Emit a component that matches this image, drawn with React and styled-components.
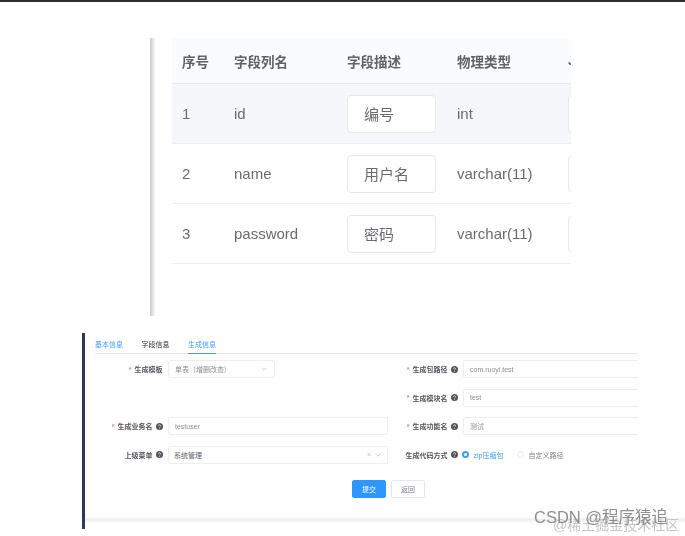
import React from "react";
import styled, { createGlobalStyle } from "styled-components";

const Global = createGlobalStyle`
  html, body { margin: 0; padding: 0; background: #fff; }
  body { font-family: "Liberation Sans", "Noto Sans CJK SC", sans-serif; }
`;
const Page = styled.div`
  position: relative; width: 685px; height: 536px; overflow: hidden; background: #fff;
  display: flex; flex-direction: column;
`;
const TopBar = styled.div`height: 2px; background: #2e2e2e; flex: none;`;
const Shot = styled.section`
  flex: none; margin: 36px 0 0 150px; width: 421px; height: 278px; display: flex;
  background: linear-gradient(90deg, #c9c9c9 0, #e6e6e6 3px, #fff 6px);
`;
const Table = styled.div`
  margin-left: 22px; width: 399px; overflow: hidden; color: #696b70; font-size: 15px; filter: blur(.5px);
`;
const Row = styled.div`
  display: grid; grid-template-columns: 62px 113px 110px 111px 60px; align-items: center;
  height: ${p => p.$head ? "45px" : "59px"};
  background: ${p => p.$head ? "#fafbfc" : p.$active ? "#f5f7fa" : "#fff"};
  border-bottom: 1px solid #ebeef5;
  ${p => p.$head && "color:#606266;font-weight:700;font-size:13.5px;border-bottom-color:#e4e8ef;"}
`;
const Cell = styled.div`padding-left: ${p => p.$first ? "10px" : "0"}; white-space: nowrap;`;
const Field = styled.div`
  box-sizing: border-box; width: ${p => p.$w || "89px"}; height: 38px; background: #fff;
  border: 1px solid #e6e8ec; border-radius: 4px; padding-left: 16px; line-height: 38px;
`;

const Shot2 = styled.section`
  flex: none; margin: 17px 0 0 82px; width: 603px; height: 196px; box-sizing: border-box;
  border-left: 3px solid #2c3a52; position: relative; color: #606266; font-size: 7px;
  display: flex; flex-direction: column; filter: blur(.45px);
`;
const Tabs = styled.div`
  margin: 0 47px 0 10px; height: 20px; display: flex; gap: 18.5px; border-bottom: 1px solid #e4e7ed; flex: none;
`;
const Tab = styled.div`
  height: 21px; box-sizing: border-box; line-height: 23px; color: ${p => p.$blue ? "#409eff" : "#303133"};
  ${p => p.$on && "border-bottom:1px solid #409eff;"}
`;
const Form = styled.div`
  display: grid; grid-template-columns: 303px 250px; margin-top: 1px; grid-auto-rows: 28.5px; flex: none;
`;
const Item = styled.div`display: flex; align-items: center; height: 28px;`;
const Label = styled.label`
  width: ${p => p.$w}px; flex: none; display: flex; justify-content: flex-end; align-items: center;
  gap: 3px; padding-right: 5.5px; box-sizing: border-box; color: #54565b; font-weight: 700; white-space: nowrap;
`;
const Star = styled.span`color: #e08a8a; margin-right: 0;`;
const Q = styled.svg`width: 7px; height: 7px; flex: none;`;
const Input = styled.div`
  box-sizing: border-box; width: ${p => p.$w}px; height: 18px; border: 1px solid #eceef2; border-radius: 2px;
  padding: 0 ${p => p.$pl ?? 6}px; display: flex; align-items: center; justify-content: space-between;
  color: ${p => p.$dark ? "#606266" : "#8a8d93"}; background: #fff;
  ${p => p.$open && "border-right:none;border-radius:2px 0 0 2px;"}
`;
const Arrow = styled.svg`width: 8px; height: 8px; flex: none;`;
const Tools = styled.span`display: flex; align-items: center; gap: 3px; color: #c0c4cc;`;
const Radios = styled.div`display: flex; align-items: center; margin-left: -1px;`;
const Dot = styled.span`
  width: 7px; height: 7px; border-radius: 50%; box-sizing: border-box; margin-right: 4.5px;
  ${p => p.$on ? "border:2px solid #409eff;background:#fff;" : "border:1px solid #e6e8ec;"}
`;
const RadioText = styled.span`margin-right: 13.5px; color: ${p => p.$on ? "#409eff" : "#7d8086"};`;
const Actions = styled.div`display: flex; gap: 5px; margin: 11px 0 0 267px;`;
const Btn = styled.button`
  width: 34px; height: 18px; padding: 0; border-radius: 2px; font: inherit; font-size: 7px;
  border: 1px solid ${p => p.$primary ? "#2d96ff" : "#e4e7ed"};
  background: ${p => p.$primary ? "#2d96ff" : "#fff"};
  color: ${p => p.$primary ? "#fff" : "#7d8086"};
`;
const Band = styled.div`
  margin-top: auto; margin-bottom: 7px; height: 5px; background: linear-gradient(#fff, #eeeff1 50%, #f7f7f8);
`;
const Mark = styled.div`
  position: absolute; white-space: nowrap; left: ${p => p.$x}px; top: ${p => p.$y}px;
  font-size: ${p => p.$s}px; color: ${p => p.$c}; filter: blur(.3px);
`;

const Help = () => (
  <Q viewBox="0 0 10 10"><circle cx="5" cy="5" r="5" fill="#555" />
    <path d="M3.5 4a1.5 1.4 0 1 1 2.2 1.2c-.5.3-.7.5-.7 1" fill="none" stroke="#fff" strokeWidth="1" />
    <circle cx="5" cy="7.8" r=".6" fill="#fff" /></Q>
);
const Chevron = () => (
  <Arrow viewBox="0 0 10 10"><path d="M2 3.5 5 6.5 8 3.5" fill="none" stroke="#b8bcc4" strokeWidth="1" /></Arrow>
);
const rows = [
  ["1", "id", "编号", "int", true],
  ["2", "name", "用户名", "varchar(11)"],
  ["3", "password", "密码", "varchar(11)"],
];

export default function App() {
  return (
    <Page>
      <Global />
      <TopBar />
      <Shot>
        <Table>
          <Row $head>
            <Cell $first>序号</Cell><Cell>字段列名</Cell><Cell>字段描述</Cell><Cell>物理类型</Cell><Cell>J</Cell>
          </Row>
          {rows.map(r => (
            <Row key={r[0]} $active={r[4]}>
              <Cell $first>{r[0]}</Cell><Cell>{r[1]}</Cell>
              <Cell><Field>{r[2]}</Field></Cell>
              <Cell>{r[3]}</Cell>
              <Cell><Field $w="60px" /></Cell>
            </Row>
          ))}
        </Table>
      </Shot>
      <Shot2>
        <Tabs>
          <Tab $blue>基本信息</Tab><Tab>字段信息</Tab><Tab $blue $on>生成信息</Tab>
        </Tabs>
        <Form>
          <Item>
            <Label $w={83}><Star>*</Star>生成模板</Label>
            <Input $w={107}>单表（增删改查）<Chevron /></Input>
          </Item>
          <Item>
            <Label $w={75}><Star>*</Star>生成包路径<Help /></Label>
            <Input $w={175} $open>com.ruoyi.test</Input>
          </Item>
          <Item />
          <Item>
            <Label $w={75}><Star>*</Star>生成模块名<Help /></Label>
            <Input $w={175} $open>test</Input>
          </Item>
          <Item>
            <Label $w={83}><Star>*</Star>生成业务名<Help /></Label>
            <Input $w={220}>testuser</Input>
          </Item>
          <Item>
            <Label $w={75}><Star>*</Star>生成功能名<Help /></Label>
            <Input $w={175} $open>测试</Input>
          </Item>
          <Item>
            <Label $w={83}>上级菜单<Help /></Label>
            <Input $w={220} $pl={5} $dark>系统管理<Tools>×<Chevron /></Tools></Input>
          </Item>
          <Item>
            <Label $w={75}>生成代码方式<Help /></Label>
            <Radios>
              <Dot $on /><RadioText $on>zip压缩包</RadioText>
              <Dot /><RadioText>自定义路径</RadioText>
            </Radios>
          </Item>
        </Form>
        <Actions>
          <Btn $primary>提交</Btn><Btn>返回</Btn>
        </Actions>
        <Band />
      </Shot2>
      <Mark $x={553} $y={514} $s={14} $c="#c6c6c6">@稀土掘金技术社区</Mark>
      <Mark $x={534} $y={504} $s={16.5} $c="#8f8f8f">CSDN @程序猿追</Mark>
    </Page>
  );
}
